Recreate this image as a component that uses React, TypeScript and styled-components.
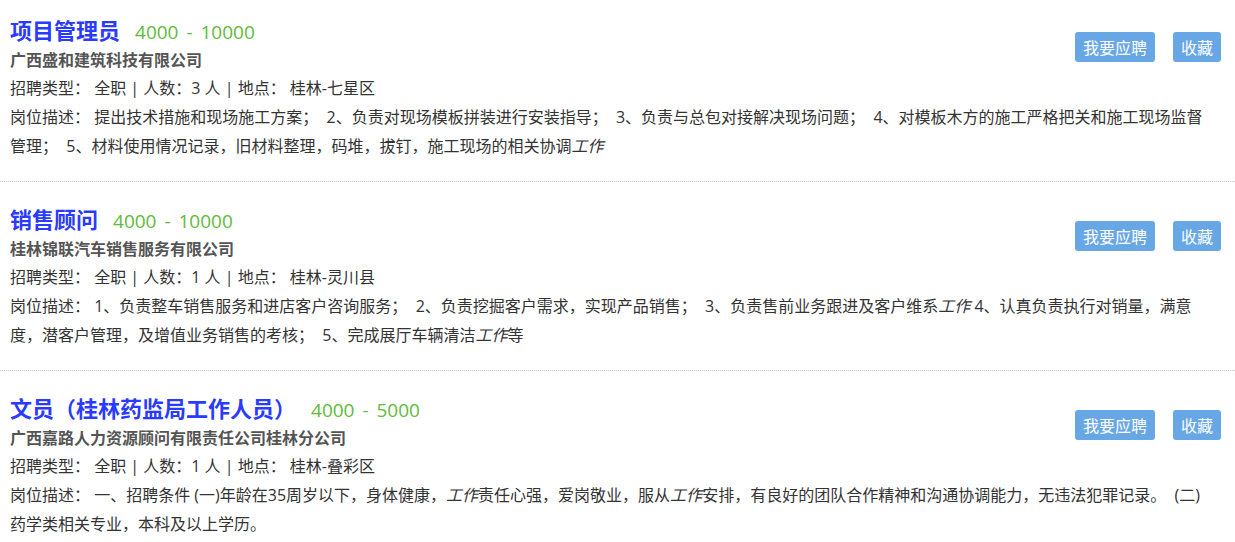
import React from "react";
import styled, { createGlobalStyle } from "styled-components";

const Global = createGlobalStyle`
  html, body { margin: 0; padding: 0; background: #fff; }
  body {
    font-family: "Open Sans", "Noto Sans CJK SC", sans-serif;
    color: #333;
  }
`;

const List = styled.div`
  display: flex;
  flex-direction: column;
`;

const Item = styled.div`
  padding: 21px 14px 20px 10px;
  border-bottom: 1px dotted #c8c8c8;
  &:first-child { padding-top: 14px; }
`;

const Head = styled.div`
  display: flex;
  align-items: center;
  justify-content: space-between;
`;

const HeadText = styled.div`
  display: flex;
  flex-direction: column;
`;

const TitleRow = styled.div`
  display: flex;
  align-items: baseline;
  height: 30px;
  line-height: 30px;
`;

const Title = styled.span`
  font-family: "Noto Sans CJK SC", sans-serif;
  font-size: 22px;
  font-weight: 700;
  color: #2a3bff;
`;

const Salary = styled.span`
  margin-left: 15px;
  font-family: "Open Sans", "Noto Sans CJK SC", sans-serif;
  font-size: 19px;
  word-spacing: 3px;
  color: #62bb3a;
  white-space: pre;
`;

const Company = styled.div`
  font-family: "Noto Sans CJK SC", sans-serif;
  font-size: 16px;
  font-weight: 700;
  color: #555;
  height: 30px;
  line-height: 30px;
`;

const Actions = styled.div`
  display: flex;
  gap: 18px;
  margin-top: 6px;
`;

const Btn = styled.button`
  height: 30px;
  padding: 0 8px;
  border: none;
  border-radius: 3px;
  background: #67a7e6;
  color: #fff;
  font-family: "Noto Sans CJK SC", sans-serif;
  font-size: 16px;
  line-height: 30px;
  cursor: pointer;
`;

const Line = styled.div`
  padding-right: 6px;
  font-family: "Open Sans", "Noto Sans CJK SC", sans-serif;
  font-size: 16px;
  line-height: 29px;
  color: #333;
  em { font-style: italic; }
`;

type Job = {
  title: string;
  salary: string;
  company: string;
  count: number;
  place: string;
  desc: React.ReactNode;
};

const S = "\u00a0 ";

const jobs: Job[] = [
  {
    title: "项目管理员",
    salary: "4000 - 10000",
    company: "广西盛和建筑科技有限公司",
    count: 3,
    place: "桂林-七星区",
    desc: (
      <>
        {`提出技术措施和现场施工方案；${S}2、负责对现场模板拼装进行安装指导；${S}3、负责与总包对接解决现场问题；${S}4、对模板木方的施工严格把关和施工现场监督管理；${S}5、材料使用情况记录，旧材料整理，码堆，拔钉，施工现场的相关协调`}
        <em>工作</em>
      </>
    ),
  },
  {
    title: "销售顾问",
    salary: "4000 - 10000",
    company: "桂林锦联汽车销售服务有限公司",
    count: 1,
    place: "桂林-灵川县",
    desc: (
      <>
        {`1、负责整车销售服务和进店客户咨询服务；${S}2、负责挖掘客户需求，实现产品销售；${S}3、负责售前业务跟进及客户维系`}
        <em>工作</em>
        {` 4、认真负责执行对销量，满意度，潜客户管理，及增值业务销售的考核；${S}5、完成展厅车辆清洁`}
        <em>工作</em>等
      </>
    ),
  },
  {
    title: "文员（桂林药监局工作人员）",
    salary: "4000 - 5000",
    company: "广西嘉路人力资源顾问有限责任公司桂林分公司",
    count: 1,
    place: "桂林-叠彩区",
    desc: (
      <>
        {"一、招聘条件 (一)年龄在35周岁以下，身体健康，"}
        <em>工作</em>责任心强，爱岗敬业，服从<em>工作</em>
        {`安排，有良好的团队合作精神和沟通协调能力，无违法犯罪记录。${S}(二)药学类相关专业，本科及以上学历。`}
      </>
    ),
  },
];

export default function App() {
  return (
    <>
      <Global />
      <List>
        {jobs.map((j) => (
          <Item key={j.title}>
            <Head>
              <HeadText>
                <TitleRow>
                  <Title>{j.title}</Title>
                  <Salary>{j.salary}</Salary>
                </TitleRow>
                <Company>{j.company}</Company>
              </HeadText>
              <Actions>
                <Btn>我要应聘</Btn>
                <Btn>收藏</Btn>
              </Actions>
            </Head>
            <Line>
              招聘类型： 全职 | 人数：{j.count} 人 | 地点： {j.place}
            </Line>
            <Line>岗位描述： {j.desc}</Line>
          </Item>
        ))}
      </List>
    </>
  );
}
